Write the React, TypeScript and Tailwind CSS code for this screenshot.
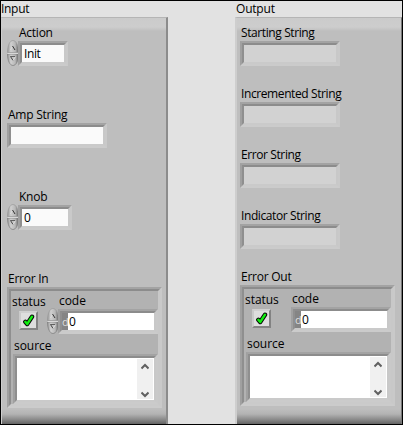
import React from "react";

type Box = { className?: string; children?: React.ReactNode };

/** Sunken frame made of two nested bevels, 4px thick in total. */
function Sunken({ className = "", inner = "", children }: Box & { inner?: string }) {
  return (
    <div className={`flex shrink-0 border-2 border-t-[#a3a3a3] border-r-[#c9c9c9] border-b-[#cbcbcb] border-l-[#a0a0a0] ${className}`}>
      <div className={`flex min-w-0 flex-1 border-2 border-t-[#8c8c8c] border-r-[#c8c8c8] border-b-[#cacaca] border-l-[#8f8f8f] ${inner}`}>
        {children}
      </div>
    </div>
  );
}

function Label({ className = "leading-[18px]", children }: Box) {
  return <div className={`h-4 shrink-0 whitespace-nowrap ${className}`}>{children}</div>;
}

function Spinner() {
  return (
    <svg className="-mt-px h-[26px] w-3 shrink-0" viewBox="0 0 12 26">
      <defs>
        <linearGradient id="knob" x1="0" x2="1" y1="0" y2="0">
          <stop offset="0" stopColor="#969696" />
          <stop offset=".3" stopColor="#d0d0d0" />
          <stop offset=".7" stopColor="#b8b8b8" />
          <stop offset="1" stopColor="#686868" />
        </linearGradient>
      </defs>
      <path d="M.5 12.500C.5 5 3 .5 6 .5S11.500 5 11.500 12.500Z" fill="url(#knob)" stroke="#959595" strokeWidth=".6" />
      <path d="M.5 14C.5 21 3 25.500 6 25.500s5.500-4.500 5.500-11.500Z" fill="url(#knob)" stroke="#7c7c7c" strokeWidth=".7" />
      <path d="M.5 13.500h11" stroke="#d8d8d8" />
      <path d="M3.500 10 5.500 6" stroke="#dedede" fill="none" />
      <path d="M5.500 6 8 10" stroke="#333" fill="none" />
      <path d="M3.500 16.500h5" stroke="#606060" />
      <path d="M3.500 16.500 6 20.500" stroke="#444" fill="none" />
      <path d="M6 20.500 8.500 16.500" stroke="#e0e0e0" fill="none" />
    </svg>
  );
}

function Check() {
  return (
    <svg className="h-[13px] w-[13px] shrink-0" viewBox="0 0 13 13" fill="none">
      <path d="M3.300 7.800 5.200 10 10 2.700" stroke="#0a0a0a" strokeWidth="4.400" strokeLinejoin="round" strokeLinecap="round" />
      <path d="M3.300 7.800 5.200 10 10 2.700" stroke="#10f010" strokeWidth="2.400" strokeLinejoin="round" strokeLinecap="round" />
    </svg>
  );
}

function ScrollBar() {
  return (
    <div className="my-px mr-px flex w-4 flex-col items-center justify-between bg-[#f0f0f0] pt-1 pb-px">
      <svg className="h-[7px] w-2" viewBox="0 0 8 7" fill="none" stroke="#606060" strokeWidth="2">
        <path d="M.5 5.500 4 2l3.500 3.500" />
      </svg>
      <svg className="h-[7px] w-2" viewBox="0 0 8 7" fill="none" stroke="#606060" strokeWidth="2">
        <path d="M.5 1.500 4 5l3.500-3.500" />
      </svg>
    </div>
  );
}

function ErrorCluster({ editable = false }: { editable?: boolean }) {
  return (
    <Sunken className="ml-[5px] h-[121px] w-[155px]" inner="flex-col bg-[#b2b2b2]">
      <div className="flex h-[43px] shrink-0">
        <div className="flex w-9 shrink-0 flex-col pl-px">
          <Label className="mt-[3px] leading-4 tracking-[-0.05px]">status</Label>
          <div className="mt-px ml-[7px] flex h-[19px] w-[19px] items-center justify-center border-2 border-t-[#d0d0d0] border-r-[#828282] border-b-[#858585] border-l-[#cacaca] bg-[#dedede]">
            <Check />
          </div>
        </div>
        <div className="flex min-w-0 flex-1 flex-col">
          <Label className="mt-0.5 ml-3 leading-4 tracking-[-0.05px]">code</Label>
          <div className="flex">
            <div className="h-[25px] w-[11px] shrink-0">{editable && <Spinner />}</div>
            <Sunken className="h-[25px] flex-1" inner="bg-white">
              <div className="w-1.5 shrink-0 overflow-hidden bg-[#858585] text-[11px] leading-[17px] text-[#dedede]">d</div>
              <div className="pl-px leading-[18px]">0</div>
            </Sunken>
          </div>
        </div>
      </div>
      <Label className="mt-1 ml-[3px] leading-4 tracking-[-0.05px]">source</Label>
      <Sunken className="ml-0.5 h-[50px] w-[145px]" inner="justify-end bg-white">
        <ScrollBar />
      </Sunken>
    </Sunken>
  );
}

function Control({ children, width }: { children: string; width: string }) {
  return (
    <div className="ml-[5px] flex h-[25px]">
      <Spinner />
      <Sunken className={`-ml-px h-[25px] ${width}`} inner="bg-[#fafafa]">
        <div className="pl-0.5 leading-[18px]">{children}</div>
      </Sunken>
    </div>
  );
}

function Panel({ title, output = false, children }: Box & { title: string; output?: boolean }) {
  return (
    <section className="flex w-[167px] shrink-0 flex-col">
      <Label className={output ? "pl-px leading-4 tracking-[-0.2px]" : "leading-4 tracking-[-0.3px]"}>{title}</Label>
      <div className={`flex h-[407px] shrink-0 flex-col border-t border-t-[#b5b5b5] bg-[linear-gradient(to_bottom,#cbcbcb,#cdcdcd_9px,#c2c2c2_12px,#bebebe_13px,#bebebe_391px,#b3b3b3_396px,#8e8e8e_401px,#646464)] ${output ? "border-r border-l-2 border-r-[#777] border-l-[#cecece]" : "border-r-2 border-l border-r-[#8c8c8c] border-l-[#cecece]"}`}>
        {children}
      </div>
    </section>
  );
}

const outputs = ["Starting String", "Incremented String", "Error String", "Indicator String"];

export default function App() {
  return (
    <main className="flex h-[425px] w-[403px] justify-between overflow-hidden border border-black bg-[#e2e2e2] font-['Open_Sans','Noto_Sans',sans-serif] text-[12px] tracking-[-0.4px] text-black">
      <Panel title="Input">
        <Label className="mt-1.5 ml-[17px] leading-[18px] tracking-[-0.25px]">Action</Label>
        <div className="mt-px">
          <Control width="w-[50px]">Init</Control>
        </div>
        <Label className="mt-10 ml-1.5 leading-[18px] tracking-[-0.25px]">Amp String</Label>
        <Sunken className="mt-px ml-[5px] h-[25px] w-[100px]" inner="bg-[#fafafa]" />
        <Label className="mt-10 ml-[17px] leading-[18px] tracking-[-0.25px]">Knob</Label>
        <div className="mt-px">
          <Control width="w-[54px]">0</Control>
        </div>
        <Label className="mt-10 ml-1.5 leading-[18px] tracking-[-0.25px]">Error In</Label>
        <div className="mt-px">
          <ErrorCluster editable />
        </div>
      </Panel>
      <Panel title="Output" output>
        <div className="flex flex-col gap-[19px] pt-1.5">
          {outputs.map((name) => (
            <div key={name}>
              <Label className="ml-1 leading-[18px]">{name}</Label>
              <Sunken className="mt-px ml-[3px] h-[25px] w-[100px]" inner="bg-[#d2d2d2]" />
            </div>
          ))}
        </div>
        <Label className="mt-[19px] ml-1 leading-[18px] tracking-[-0.25px]">Error Out</Label>
        <div className="-ml-0.5 mt-px">
          <ErrorCluster />
        </div>
      </Panel>
    </main>
  );
}
